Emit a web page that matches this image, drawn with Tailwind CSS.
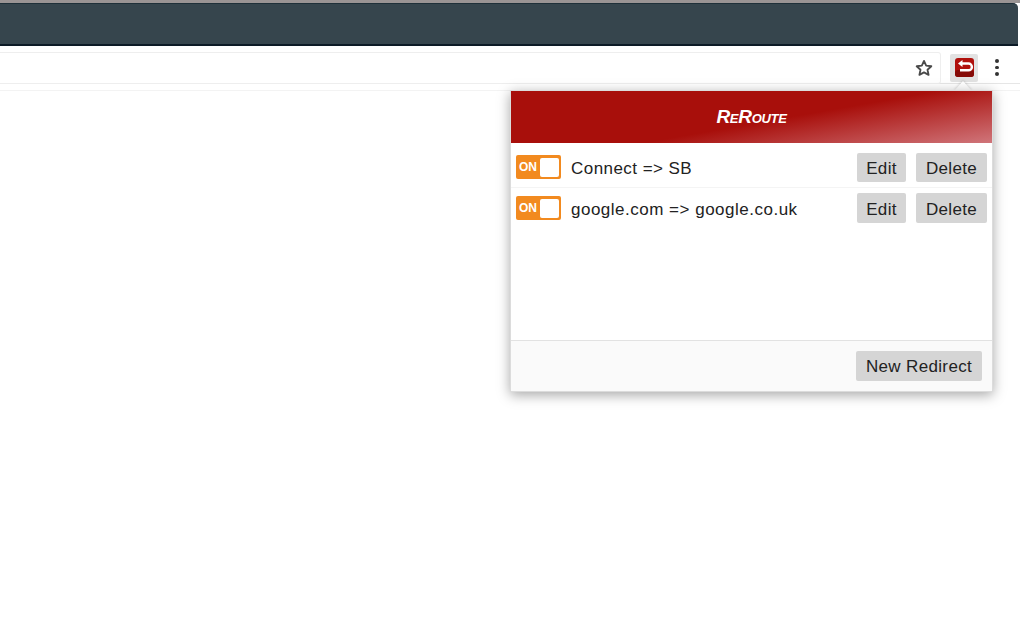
<!DOCTYPE html>
<html lang="en">
<head>
    <meta charset="UTF-8">
    <script src="https://cdn.jsdelivr.net/npm/@tailwindcss/browser@4"></script>
    <title>ReRoute</title>
</head>
<body class="bg-white font-['Liberation_Sans',sans-serif]">
    <div class="relative h-[638px] w-[1020px] overflow-hidden bg-white">
        <!-- browser frame -->
        <div class="h-[3px] bg-[#9a9494]"></div>
        <div class="h-[43px] mr-[2px] rounded-tr-[5px] bg-[#36454d] border-t border-b-2 border-t-[#1f3039] border-b-[#0c1a26]"></div>
        <!-- toolbar -->
        <div class="flex h-[38px] items-center border-b border-[#e6e6e6] pt-[6px]">
            <div class="h-[32px] w-[941px] rounded-r-[3px] border-y border-r border-[#eeeeee] bg-white flex items-center justify-end pr-[6px]">
                <svg class="w-[20px] h-[20px]" viewBox="0 0 24 24" fill="none" stroke="#4a4a4a" stroke-width="2.2" stroke-linejoin="round"><path d="M12 3.5l2.6 5.7 6.2.7-4.6 4.2 1.3 6.1L12 17.2l-5.5 3 1.3-6.1-4.6-4.2 6.2-.7z"/></svg>
            </div>
            <div class="ml-[9px] flex h-[28px] w-[28px] items-center justify-center bg-[#e2e2e2] rounded-[2px]">
                <svg class="w-[19px] h-[19px]" viewBox="0 0 19 19">
                    <rect width="19" height="19" rx="3" fill="#b0100c"/>
                    <rect y="12" width="19" height="7" rx="3" fill="#850b08"/>
                    <path d="M6 5.5h7.5a3.3 3.3 0 0 1 0 6.8H5" fill="none" stroke="#fff" stroke-width="2.4"/>
                    <path d="M7.5 2L3 5.5 7.5 9z" fill="#fff"/>
                </svg>
            </div>
            <div class="ml-[17px] flex flex-col gap-[3px]">
                <span class="h-[3.5px] w-[3.5px] rounded-full bg-[#333]"></span>
                <span class="h-[3.5px] w-[3.5px] rounded-full bg-[#333]"></span>
                <span class="h-[3.5px] w-[3.5px] rounded-full bg-[#333]"></span>
            </div>
        </div>
        <div class="h-[7px] border-b border-[#f3f3f3]"></div>

        <!-- popup notch -->
        <div class="absolute left-[954px] top-[81px] h-0 w-0 border-x-[9px] border-b-[10px] border-x-transparent border-b-white drop-shadow-[0_-1px_1px_rgba(0,0,0,0.15)]"></div>

        <!-- popup -->
        <div class="absolute left-[510px] top-[90px] flex h-[302px] w-[483px] flex-col border border-[#dcdcdc] bg-white shadow-[0_3px_12px_rgba(0,0,0,0.35)]">
            <div class="flex h-[52px] shrink-0 items-center justify-center bg-[linear-gradient(170deg,#a80f0b_0%,#a80f0b_55%,#d0757a_100%)] text-[19px] font-bold italic tracking-[-0.3px] text-white [font-variant:small-caps]">ReRoute</div>
            <div class="flex-1">
                <div class="flex h-[45px] items-center border-b border-[#f4f4f4] px-[5px] pt-[4px]">
                    <div class="flex h-[24px] w-[45px] items-center justify-between rounded-[2px] bg-[#f28a1f] pl-[3px] pr-[2px] text-[12px] font-bold text-white">
                        <span>ON</span><span class="h-[19px] w-[19px] rounded-[2px] bg-white"></span>
                    </div>
                    <span class="ml-[10px] flex-1 pt-[3px] text-[17px] tracking-[0.45px] text-[#222]">Connect =&gt; SB</span>
                    <button class="h-[29px] w-[49px] rounded-[2px] bg-[#d5d5d5] pt-[3px] text-[17px] tracking-[0.35px] text-[#222]">Edit</button>
                    <button class="ml-[10px] h-[29px] w-[71px] rounded-[2px] bg-[#d5d5d5] pt-[3px] text-[17px] tracking-[0.35px] text-[#222]">Delete</button>
                </div>
                <div class="flex h-[40px] items-center px-[5px]">
                    <div class="flex h-[24px] w-[45px] items-center justify-between rounded-[2px] bg-[#f28a1f] pl-[3px] pr-[2px] text-[12px] font-bold text-white">
                        <span>ON</span><span class="h-[19px] w-[19px] rounded-[2px] bg-white"></span>
                    </div>
                    <span class="ml-[10px] flex-1 pt-[3px] text-[17px] tracking-[0.5px] text-[#222]">google.com =&gt; google.co.uk</span>
                    <button class="h-[30px] w-[49px] rounded-[2px] bg-[#d5d5d5] pt-[3px] text-[17px] tracking-[0.35px] text-[#222]">Edit</button>
                    <button class="ml-[10px] h-[30px] w-[71px] rounded-[2px] bg-[#d5d5d5] pt-[3px] text-[17px] tracking-[0.35px] text-[#222]">Delete</button>
                </div>
            </div>
            <div class="flex h-[51px] shrink-0 items-center justify-end border-t border-[#e2e2e2] bg-[#fafafa] pr-[10px]">
                <button class="h-[30px] w-[126px] rounded-[2px] bg-[#d5d5d5] pt-[2px] text-[17px] tracking-[0.35px] text-[#222]">New Redirect</button>
            </div>
        </div>
    </div>
</body>
</html>
